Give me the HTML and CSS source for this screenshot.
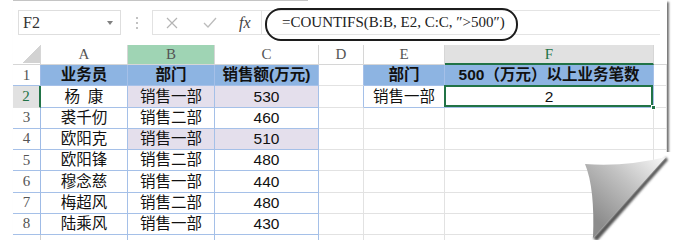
FILE: index.html
```html
<!DOCTYPE html>
<html lang="zh-CN">
<head>
    <meta charset="UTF-8">
    <title>COUNTIFS</title>
    <link rel="stylesheet" href="styles.css">
</head>
<body>
<div class="page">
    <div class="topline"></div>

    <div class="formula-bar">
        <div class="name-box"><span>F2</span><span class="caret"></span></div>
        <div class="grip"><i></i><i></i><i></i></div>
        <div class="fx-tools">
            <svg width="12" height="12" viewBox="0 0 12 12"><path d="M1 1 L11 11 M11 1 L1 11" stroke="#b4b4b4" stroke-width="1.2" fill="none"/></svg>
            <svg width="14" height="11" viewBox="0 0 14 11"><path d="M1 6 L5 10 L13 1" stroke="#bcbcbc" stroke-width="1.3" fill="none"/></svg>
            <span class="fx">fx</span>
        </div>
        <div class="formula-input">=COUNTIFS(B:B, E2, C:C, ″&gt;500″)</div>
        <div class="callout"></div>
    </div>

    <table class="sheet">
        <colgroup>
            <col style="width:28px"><col style="width:87px"><col style="width:87px"><col style="width:104px">
            <col style="width:45px"><col style="width:81px"><col style="width:209px"><col style="width:13px">
        </colgroup>
        <tr class="col-head">
            <th class="corner"><span></span></th>
            <th>A</th><th class="sel-col">B</th><th>C</th><th>D</th><th>E</th><th class="cur-col">F</th><th class="blank"></th>
        </tr>
        <tr>
            <td class="rh t">1</td>
            <td class="t hd">业务员</td><td class="t hd">部门</td><td class="t hd">销售额(万元)</td>
            <td class="edge"></td>
            <td class="t hd">部门</td><td class="t hd">500（万元）以上业务笔数</td><td></td>
        </tr>
        <tr>
            <td class="rh cur-row">2</td>
            <td class="t">杨&ensp;康</td><td class="t lav">销售一部</td><td class="t lav num">530</td>
            <td class="edge"></td>
            <td class="t">销售一部</td><td class="t active num">2</td><td></td>
        </tr>
        <tr>
            <td class="rh t">3</td>
            <td class="t">裘千仞</td><td class="t">销售二部</td><td class="t num">460</td>
            <td></td><td></td><td></td><td></td>
        </tr>
        <tr>
            <td class="rh t">4</td>
            <td class="t">欧阳克</td><td class="t lav">销售一部</td><td class="t lav num">510</td>
            <td></td><td></td><td></td><td></td>
        </tr>
        <tr>
            <td class="rh t">5</td>
            <td class="t">欧阳锋</td><td class="t">销售二部</td><td class="t num">480</td>
            <td></td><td></td><td></td><td></td>
        </tr>
        <tr>
            <td class="rh t">6</td>
            <td class="t">穆念慈</td><td class="t">销售一部</td><td class="t num">440</td>
            <td></td><td></td><td></td><td></td>
        </tr>
        <tr>
            <td class="rh t">7</td>
            <td class="t">梅超风</td><td class="t">销售二部</td><td class="t num">480</td>
            <td></td><td></td><td></td><td></td>
        </tr>
        <tr>
            <td class="rh t">8</td>
            <td class="t">陆乘风</td><td class="t">销售一部</td><td class="t num">430</td>
            <td></td><td></td><td></td><td></td>
        </tr>
        <tr class="cut">
            <td class="rh"></td><td class="t"></td><td class="t"></td><td class="t"></td>
            <td></td><td></td><td></td><td></td>
        </tr>
    </table>

    <svg class="curl" width="117" height="109" viewBox="0 0 117 109">
        <defs>
            <linearGradient id="curlShade" gradientUnits="userSpaceOnUse" x1="96" y1="14" x2="36" y2="80">
                <stop offset="0" stop-color="#f4f4f4"/>
                <stop offset="0.45" stop-color="#c2c2c2"/>
                <stop offset="1" stop-color="#8c8c8c"/>
            </linearGradient>
            <filter id="soft" x="-20%" y="-20%" width="140%" height="140%">
                <feGaussianBlur stdDeviation="1.2"/>
            </filter>
        </defs>
        <path d="M33 98 L106 17 L106 12 L117 12 L117 109 L33 109 Z" fill="#fff"/>
        <path d="M106 17 L108 20 L37 101 L33 98 Z" fill="#555" filter="url(#soft)"/>
        <path d="M25 24 Q65 27 106 17 L33 98 Q35 48 25 24 Z" fill="url(#curlShade)"/>
    </svg>
</div>
</body>
</html>
```

FILE: styles.css
```css
body {
    margin: 0;
    background: #fff;
    font-family: "Liberation Sans", "Noto Sans CJK SC", sans-serif;
    color: #111;
}
.page {
    position: relative;
    margin-left: 13px;
    width: 654px;
    height: 240px;
    background: #fff;
    box-shadow: 2px 2px 2px rgba(0, 0, 0, 0.55);
}
.topline {
    width: 295px;
    height: 1px;
    background: #c4c4c4;
}
.formula-bar {
    display: flex;
    align-items: center;
    height: 25px;
    margin-top: 9px;
    padding-left: 5px;
}
.name-box {
    display: flex;
    align-items: center;
    justify-content: space-between;
    box-sizing: border-box;
    width: 103px;
    height: 25px;
    padding: 0 7px 0 4px;
    border: 1px solid #dedede;
    font-family: "Liberation Serif", serif;
    font-size: 16px;
    color: #333;
}
.caret {
    width: 0;
    height: 0;
    border-left: 3px solid transparent;
    border-right: 3px solid transparent;
    border-top: 4px solid #808080;
}
.grip {
    display: flex;
    flex-direction: column;
    align-items: center;
    gap: 3px;
    width: 31px;
}
.grip i {
    width: 2px;
    height: 2px;
    background: #c2c2c2;
}
.fx-tools {
    display: flex;
    align-items: center;
    box-sizing: border-box;
    width: 110px;
    height: 25px;
    padding-left: 13px;
    gap: 25px;
    border: 1px solid #e2e2e2;
}
.fx {
    font-family: "Liberation Serif", serif;
    font-style: italic;
    font-size: 16px;
    color: #444;
    margin-left: -3px;
}
.formula-input {
    flex: 1;
    box-sizing: border-box;
    height: 25px;
    margin-right: 7px;
    padding-left: 20px;
    border-top: 1px solid #e4e4e4;
    border-bottom: 1px solid #e4e4e4;
    font-family: "Liberation Serif", serif;
    font-size: 15px;
    line-height: 23px;
    color: #222;
}
.callout {
    position: absolute;
    left: 252px;
    top: 8px;
    width: 253px;
    height: 33px;
    box-sizing: border-box;
    border: 2px solid #1c1c1c;
    border-radius: 16px;
}
.sheet {
    table-layout: fixed;
    width: 654px;
    margin-top: 10px;
    border-collapse: separate;
    border-spacing: 0;
}
.sheet th,
.sheet td {
    padding: 0;
    box-sizing: border-box;
    border-right: 1px solid #e2e2e2;
    border-bottom: 1px solid #e2e2e2;
    text-align: center;
    vertical-align: middle;
    line-height: 1;
    overflow: hidden;
    white-space: nowrap;
}
.col-head th {
    height: 20px;
    font-family: "Liberation Serif", serif;
    font-weight: normal;
    font-size: 15px;
    color: #555;
    border-right-color: #d6d6d6;
    border-bottom-color: #d6d6d6;
}
.col-head .sel-col {
    background: #9fd4b4;
}
.col-head .cur-col {
    background: #e1e1e1;
    color: #217346;
    border-bottom: 2px solid #217346;
}
.col-head .blank {
    border-right: none;
}
.corner {
    text-align: left;
}
.corner span {
    display: block;
    width: 18px;
    height: 17px;
    margin-left: 9px;
    background: linear-gradient(to bottom right, transparent 50%, #d2d2d2 50%);
}
.sheet tr {
    height: 21.25px;
}
.sheet .col-head {
    height: 20px;
}
.sheet .cut {
    height: 5px;
}
.cut td {
    border-bottom: none;
}
.sheet td {
    font-size: 15.5px;
}
.sheet .rh {
    font-family: "Liberation Serif", serif;
    font-size: 15px;
    color: #555;
    border-right-color: #d0d0d0;
}
.sheet .rh.t {
    border-right-color: #9fbbe6;
}
.sheet .cur-row {
    background: #e1e1e1;
    color: #217346;
    border-right: 2px solid #217346;
}
.sheet .t {
    border-right-color: #a5c0e8;
    border-bottom-color: #a5c0e8;
}
.sheet .edge {
    border-right-color: #a5c0e8;
}
.hd {
    background: #8db4e2;
    font-weight: bold;
}
.lav {
    background: #e4dfec;
}
.num {
    font-size: 15px;
}
.sheet .active {
    position: relative;
    overflow: visible;
}
.active::before {
    content: "";
    position: absolute;
    left: -1px;
    top: -1px;
    right: 0;
    bottom: 0;
    border: 2px solid #217346;
}
.active::after {
    content: "";
    position: absolute;
    right: -3px;
    bottom: -3px;
    width: 5px;
    height: 5px;
    background: #217346;
    border: 1px solid #fff;
    box-sizing: border-box;
}
.curl {
    position: absolute;
    left: 547px;
    top: 140px;
    overflow: visible;
}
```
